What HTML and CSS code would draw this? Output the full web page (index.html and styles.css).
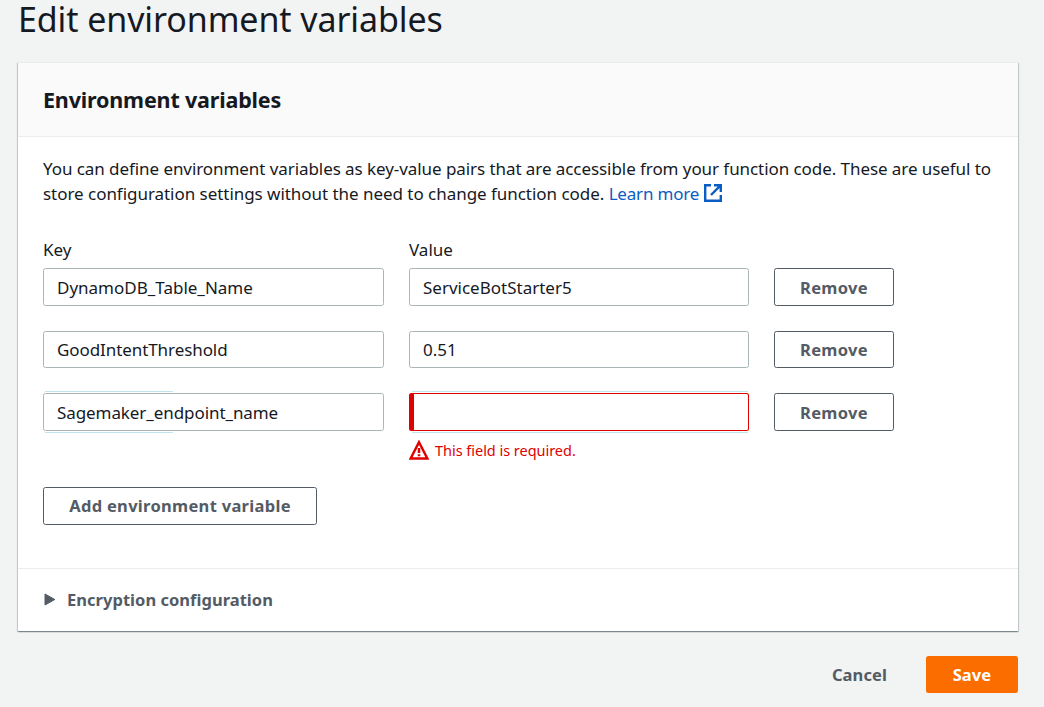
FILE: index.html
```html
<!DOCTYPE html>
<html lang="en">
<head>
<meta charset="utf-8">
<title>Edit environment variables</title>
<link rel="stylesheet" href="styles.css">
</head>
<body>
<main class="page">
  <h1 class="title">Edit environment variables</h1>
  <section class="card">
    <header class="card-header"><h2>Environment variables</h2></header>
    <div class="card-body">
      <p class="intro"><span class="line-one">You can define environment variables as key-value pairs that are accessible from your function code. These are useful to</span><br><span class="line-two">store configuration settings without the need to change function code.</span> <a class="learn"><span>Learn more</span><svg class="external" viewBox="0 0 18 18"><path d="M7 1.2H1.2v15.6h15.6V11M10 1.2h6.8V8M16.8 1.2L7 11"/></svg></a></p>
      <div class="grid">
        <div class="label">Key</div><div class="label">Value</div><div></div>
        <div class="input">DynamoDB_Table_Name</div>
        <div class="input">ServiceBotStarter5</div>
        <div class="button">Remove</div>
        <div class="input middle tight">GoodIntentThreshold</div>
        <div class="input middle">0.51</div>
        <div class="button middle">Remove</div>
        <div class="input tight glow glow-short">Sagemaker_endpoint_name</div>
        <div class="input glow invalid"></div>
        <div class="button">Remove</div>
      </div>
      <div class="error"><svg class="warning" viewBox="0 0 20 20"><path d="M10 2.2L18.4 18.5H1.6Z"/><path d="M10 8v5M10 14.2v2"/></svg><span class="error-text">This field is required.</span></div>
      <div class="button add">Add environment variable</div>
    </div>
    <footer class="expander"><svg class="caret" viewBox="0 0 12 13"><path d="M1 1L10.8 6.5L1 12Z"/></svg><span>Encryption configuration</span></footer>
  </section>
  <div class="actions"><div class="cancel">Cancel</div><div class="save">Save</div></div>
</main>
</body>
</html>
```
FILE: styles.css
```css
* { box-sizing: border-box; }
body { margin: 0; height: 707px; overflow: hidden; background: #f2f3f3; color: #16191f; font: 17px/25px "Noto Sans", "Open Sans", sans-serif; white-space: nowrap; }
h1, h2, p { margin: 0; }
.page { padding: 0 26px 0 18px; }
.title { height: 62px; font-size: 34px; line-height: 38px; font-weight: 400; letter-spacing: -.1px; }
.card { height: 569px; background: #fff; box-shadow: 0 1px 1px 0 rgba(0,28,36,.3), 1px 1px 1px 0 rgba(0,28,36,.15), -1px 1px 1px 0 rgba(0,28,36,.15); border-top: 1px solid #eaeded; }
.card-header { height: 74px; padding: 23px 25px; background: #fafafa; border-bottom: 1px solid #eaeded; }
h2 { font-size: 21.5px; line-height: 28px; font-weight: 700; letter-spacing: -.17px; }
.card-body { height: 431px; padding: 19px 25px 0; }
.line-one { letter-spacing: -.068px; }
.line-two { letter-spacing: -.04px; }
.learn { color: #0a5dc2; letter-spacing: -.2px; }
.external { width: 18px; height: 18px; margin-left: 5px; vertical-align: -2px; fill: none; stroke: currentColor; stroke-width: 2.4; }
.grid { display: grid; grid-template-columns: 341px 340px 120px; column-gap: 25px; grid-template-rows: 31px 63px 62px 38px; align-items: start; margin-top: 31px; }
.label { height: 25px; }
.input { position: relative; height: 38px; padding: 0 13px; border: 1px solid #aab7b8; border-radius: 2.5px; line-height: 37px; }
.tight { letter-spacing: -.08px; }
.button { height: 38px; border: 1px solid #545b64; border-radius: 2.5px; color: #545b64; font-size: 16.5px; font-weight: 700; line-height: 37px; text-align: center; letter-spacing: .3px; }
.middle { height: 37px; line-height: 35px; }
.glow::before, .glow::after { content: ""; position: absolute; left: 2px; right: 0; height: 1px; background: #bfe5ee; }
.glow::before { top: -3px; }
.glow::after { bottom: -3px; }
.glow-short::before, .glow-short::after { left: 1px; right: 210px; }
.invalid { border-color: #df0000; border-left-width: 5px; }
.invalid::before, .invalid::after { left: -2px; }
.error { display: flex; align-items: center; height: 25px; margin: 6px 0 0 366px; color: #df0000; font-size: 14.5px; letter-spacing: -.03px; }
.error-text { padding-top: 2px; }
.warning { width: 20px; height: 20px; margin-right: 6px; fill: none; stroke: currentColor; stroke-width: 2.5; }
.add { width: 274px; margin-top: 25px; line-height: 36px; }
.expander { display: flex; align-items: center; height: 63px; padding: 0 25px 2px; border-top: 1px solid #eaeded; color: #545b64; font-size: 16.5px; font-weight: 700; letter-spacing: .03px; }
.caret { width: 12px; height: 13px; margin: 0 11px 0 1px; fill: currentColor; stroke: currentColor; stroke-linejoin: round; }
.actions { display: flex; justify-content: flex-end; margin-top: 25px; font-size: 16.5px; font-weight: 700; line-height: 37px; letter-spacing: .1px; }
.cancel { margin-right: 39px; color: #545b64; }
.save { width: 92px; height: 37px; border-radius: 2.5px; background: #fc6d00; color: #fff; text-align: center; }
```
